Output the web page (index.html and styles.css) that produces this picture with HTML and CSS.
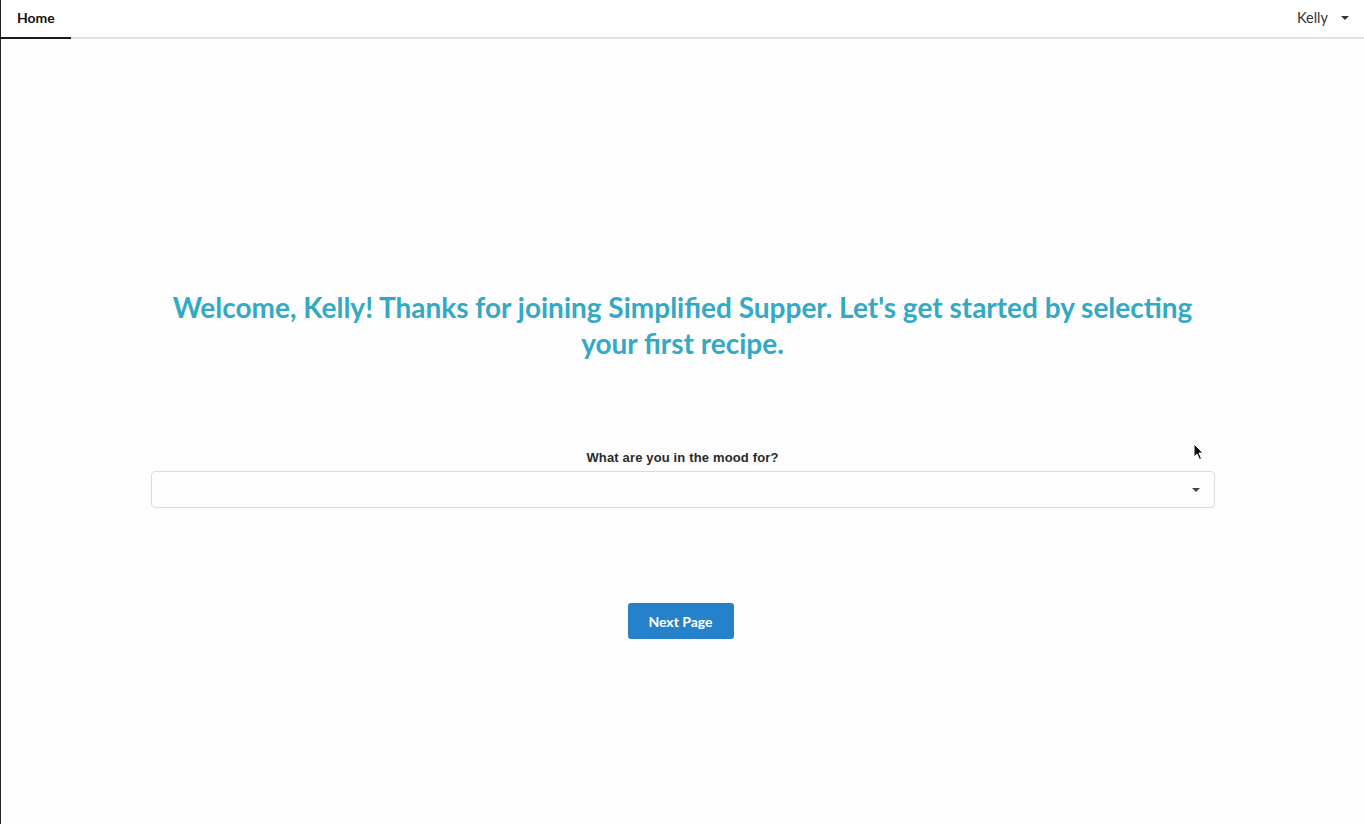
FILE: index.html
```html
<!DOCTYPE html>
<html>
<head>
<meta charset="utf-8">
<link rel="stylesheet" href="styles.css">
</head>
<body>
<div class="page">
  <nav class="nav">
    <a class="tab active">Home</a>
    <div class="user">Kelly <span class="caret"></span></div>
  </nav>
  <main class="main">
    <h1 class="title">Welcome, Kelly! Thanks for joining Simplified Supper. Let's get started by selecting your first recipe.</h1>
    <div class="field">
      <label class="label">What are you in the mood for?</label>
      <div class="select"><span class="caret"></span></div>
    </div>
    <button class="btn">Next Page</button>
  </main>
  <svg class="cursor" width="12" height="18" viewBox="0 0 12 18"><path d="M1 1 L1 14 L4 11 L6.5 16.5 L8.5 15.5 L6 10 L10 10 Z" fill="#111" stroke="#fff" stroke-width="1"/></svg>
</div>
</body>
</html>
```
FILE: styles.css
```css
html, body { margin: 0; padding: 0; }
body {
  background: #fdfdfd;
  font-family: Lato, "Liberation Sans", sans-serif;
  color: #222;
}
.page {
  position: relative;
  min-height: 824px;
  height: 824px;
  border-left: 1px solid #222;
  box-sizing: border-box;
  display: flex;
  flex-direction: column;
}
.nav {
  height: 37px;
  border-bottom: 2px solid #e2e2e2;
  display: flex;
  align-items: stretch;
  justify-content: space-between;
  background: #fff;
}
.tab {
  display: flex;
  align-items: center;
  padding: 0 15px 2px 16px;
  font-weight: 700;
  font-size: 14px;
  color: #111;
  border-bottom: 2px solid #1a1a1a;
  margin-bottom: -2px;
  width: 39px;
}
.user {
  display: flex;
  align-items: center;
  gap: 13px;
  font-size: 14.5px;
  color: #333;
  padding: 0 15px 2px 0;
}
.caret {
  display: inline-block;
  width: 0; height: 0;
  border-left: 4px solid transparent;
  border-right: 4px solid transparent;
  border-top: 4px solid #333;
}
.main {
  display: flex;
  flex-direction: column;
  align-items: center;
  padding-top: 250px;
}
.title {
  margin: 0;
  width: 1040px;
  text-align: center;
  font-size: 28px;
  line-height: 36px;
  font-weight: 700;
  color: #33a9c3;
}
.field {
  margin-top: 89px;
  width: 1064px;
  display: flex;
  flex-direction: column;
  align-items: center;
}
.label {
  font-family: "Liberation Sans", Arial, sans-serif;
  font-weight: 700;
  font-size: 13px;
  letter-spacing: 0.15px;
  color: #2a2a2a;
  margin-bottom: 6px;
}
.select {
  width: 100%;
  height: 37px;
  box-sizing: border-box;
  border: 1px solid #dcdcdc;
  border-radius: 4px;
  background: #fdfdfd;
  display: flex;
  align-items: center;
  justify-content: flex-end;
  padding-right: 14px;
}
.select .caret { border-top-color: #444; }
.btn {
  margin-top: 95px;
  margin-right: 4px;
  width: 106px;
  height: 36px;
  background: #2582ca;
  color: #fff;
  border: none;
  border-radius: 3px;
  font-family: Lato, "Liberation Sans", sans-serif;
  font-weight: 700;
  font-size: 14px;
}
.cursor {
  position: absolute;
  left: 1192px;
  top: 443px;
}
```
